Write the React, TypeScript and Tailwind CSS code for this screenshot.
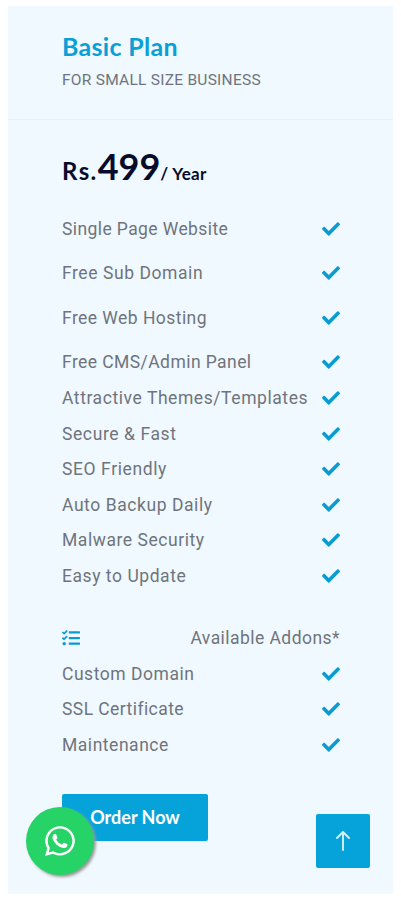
import { FaCheck, FaTasks, FaWhatsapp } from "react-icons/fa";

type Feature = { label: string; row: string; tracking: string };

const features: Feature[] = [
  { label: "Single Page Website", row: "h-[44.6px]", tracking: "tracking-[0.4px]" },
  { label: "Free Sub Domain", row: "h-[44.6px]", tracking: "tracking-[0.57px]" },
  { label: "Free Web Hosting", row: "h-[44.6px]", tracking: "tracking-[0.45px]" },
  { label: "Free CMS/Admin Panel", row: "h-[35.6px]", tracking: "tracking-[0.43px]" },
  { label: "Attractive Themes/Templates", row: "h-[35.6px]", tracking: "tracking-[0.57px]" },
  { label: "Secure & Fast", row: "h-[35.6px]", tracking: "tracking-[0.6px]" },
  { label: "SEO Friendly", row: "h-[35.6px]", tracking: "tracking-[0.6px]" },
  { label: "Auto Backup Daily", row: "h-[35.6px]", tracking: "tracking-[0.57px]" },
  { label: "Malware Security", row: "h-[35.6px]", tracking: "tracking-[0.55px]" },
  { label: "Easy to Update", row: "h-[62px]", tracking: "tracking-[0.55px]" },
];

const addons: Feature[] = [
  { label: "Custom Domain", row: "h-[35.6px]", tracking: "tracking-[0.53px]" },
  { label: "SSL Certificate", row: "h-[35.6px]", tracking: "tracking-[0.43px]" },
  { label: "Maintenance", row: "h-[35.6px]", tracking: "tracking-[0.53px]" },
];

function FeatureRow({ label, row, tracking }: Feature) {
  return (
    <li className={`flex items-start justify-between ${row}`}>
      <span className={`whitespace-nowrap leading-[27px] ${tracking}`}>{label}</span>
      <FaCheck className="mt-[4px] size-[18px] shrink-0 text-[#0a9bd0]" />
    </li>
  );
}

export default function App() {
  return (
    <div className="relative h-[900px] w-[401px] overflow-hidden bg-white px-2 pt-1.5 font-['Roboto',sans-serif] text-[#6f747c]">
      <main className="h-[888px] w-[385px] bg-[#eff9ff]">
        <header className="h-[114px] border-b border-[#e3f0f8] pl-[54px] pt-[24px]">
          <h1 className="font-['Lato',sans-serif] text-[25px] font-bold leading-[32px] tracking-[0.3px] text-[#0a9fd5]">Basic Plan</h1>
          <p className="mt-[8px] text-[15.5px] leading-[20px] tracking-[0.26px]">FOR SMALL SIZE BUSINESS</p>
        </header>
        <div className="pl-[54px] pr-[53px]">
          <div className="flex h-[95.6px] items-baseline whitespace-nowrap pt-[23px] font-['Lato',sans-serif] font-bold text-[#080c2b]">
            <span className="text-[24px] leading-[46px] tracking-[1.4px]">Rs.</span>
            <span className="text-[36px] leading-[46px]">499</span>
            <span className="text-[17px] leading-[46px] tracking-[0.3px]">/ Year</span>
          </div>
          <ul className="text-[17.5px]">
            {features.map((item) => (
              <FeatureRow key={item.label} {...item} />
            ))}
            <li className="flex h-[35.6px] items-start justify-between">
              <FaTasks className="mt-[4px] size-[18px] text-[#0a9bd0]" />
              <span className="leading-[27px] tracking-[0.45px]">Available Addons*</span>
            </li>
            {addons.map((item) => (
              <FeatureRow key={item.label} {...item} />
            ))}
          </ul>
          <button className="mt-[26.4px] h-[47px] w-[146px] rounded-[2px] bg-[#06a3da] font-['Lato',sans-serif] text-[18px] font-bold text-white">
            Order Now
          </button>
        </div>
      </main>
      <a className="absolute left-[26px] top-[807px] flex size-[68px] items-center justify-center rounded-full bg-[#25d366] text-white shadow-[2px_2px_3px_#999]">
        <FaWhatsapp className="size-[34px]" />
      </a>
      <a className="absolute left-[316px] top-[814px] flex size-[54px] items-center justify-center rounded-[2px] bg-[#06a3da] text-white">
        <svg viewBox="0 0 16 22" className="h-[22px] w-4" fill="none" stroke="#d5f0fb" strokeWidth="1.9" strokeLinecap="round" strokeLinejoin="round">
          <path d="M8 20V2M2 8l6-6 6 6" />
        </svg>
      </a>
    </div>
  );
}
